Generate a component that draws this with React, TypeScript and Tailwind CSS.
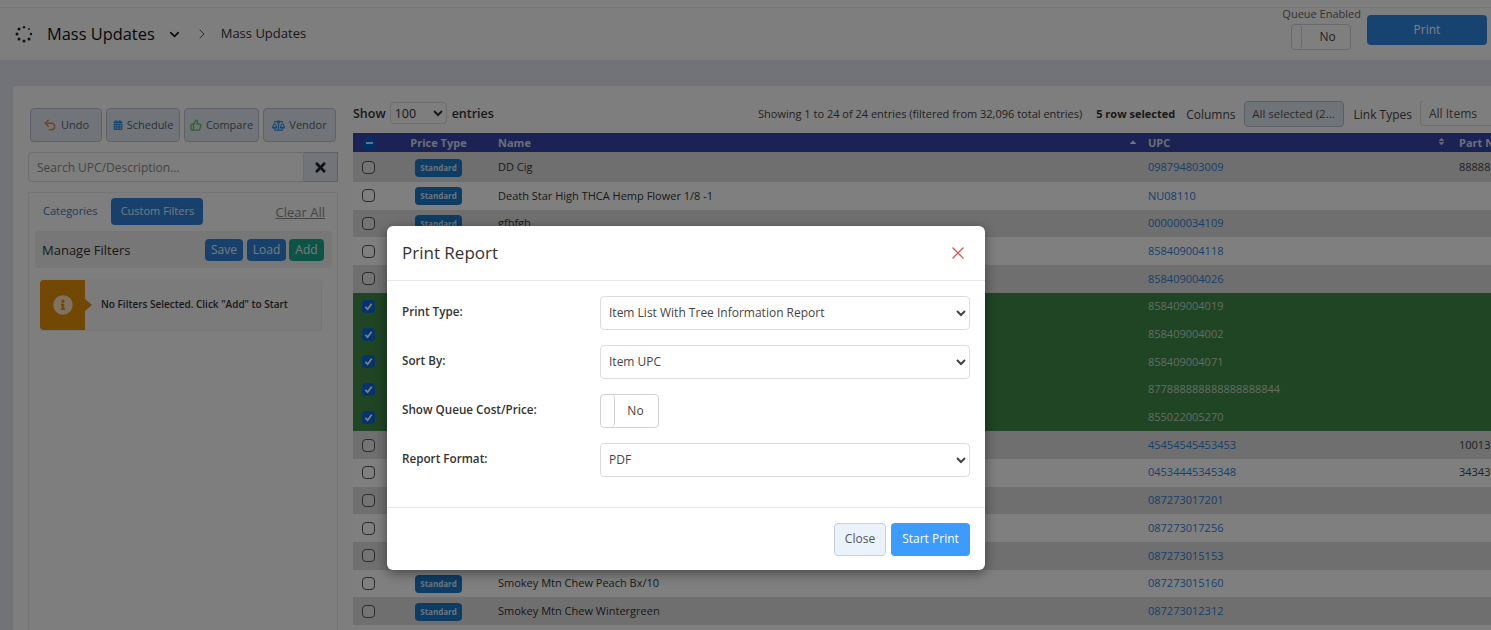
import React from 'react';
import { ChevronDown, ChevronRight, ThumbsUp, Undo2, X } from 'lucide-react';
import { FaBalanceScale, FaCalendarAlt, FaCaretUp, FaInfoCircle, FaSort, FaTimes } from 'react-icons/fa';

type Row = { upc: string; name?: string; part?: string; selected?: boolean; hideBadge?: boolean };

// rows 4-15 sit behind the dialog, so their price badge never shows
const rows: Row[] = [
  { upc: '098794803009', name: 'DD Cig', part: '88888' },
  { upc: 'NU08110', name: 'Death Star High THCA Hemp Flower 1/8 -1' },
  { upc: '000000034109', name: 'gfbfgh' },
  { upc: '858409004118', hideBadge: true },
  { upc: '858409004026', hideBadge: true },
  { upc: '858409004019', selected: true, hideBadge: true },
  { upc: '858409004002', selected: true, hideBadge: true },
  { upc: '858409004071', selected: true, hideBadge: true },
  { upc: '877888888888888888844', selected: true, hideBadge: true },
  { upc: '855022005270', selected: true, hideBadge: true },
  { upc: '45454545453453', part: '10013', hideBadge: true },
  { upc: '04534445345348', part: '34343', hideBadge: true },
  { upc: '087273017201', hideBadge: true },
  { upc: '087273017256', hideBadge: true },
  { upc: '087273015153', hideBadge: true },
  { upc: '087273015160', name: 'Smokey Mtn Chew Peach Bx/10' },
  { upc: '087273012312', name: 'Smokey Mtn Chew Wintergreen' },
];

const ToolButton = ({ icon, label, width }: { icon: React.ReactNode; label: string; width: string }) => (
  <button className={`${width} h-[34px] flex items-center justify-center gap-1 rounded border border-[#bcc5d0] bg-[#e2eaf2] text-[11px] text-[#59616b]`}>
    {icon}
    {label}
  </button>
);

const Spinner = () => (
  <svg width="18" height="18" viewBox="0 0 18 18" fill="#222">
    <circle cx="9" cy="2.2" r="1.2" />
    <circle cx="4" cy="4" r="1.5" />
    <circle cx="2" cy="9" r="1.5" />
    <circle cx="4" cy="14" r="1.5" />
    <circle cx="9" cy="16" r="1.5" />
    <circle cx="14" cy="14" r="1.5" />
    <circle cx="16" cy="9" r="1.2" />
    <circle cx="14" cy="4" r="0.9" />
  </svg>
);

const Toggle = ({ outer, knob, text }: { outer: string; knob: string; text: string }) => (
  <div className={`${outer} flex rounded border border-[#cfd3d8] bg-white`}>
    <div className={`${knob} rounded border-r border-[#cfd3d8]`} />
    <div className={`flex-1 flex items-center justify-center ${text}`}>No</div>
  </div>
);

const ModalSelect = ({ value }: { value: string }) => (
  <select
    defaultValue={value}
    className="w-[370px] h-[34px] rounded border border-[#d9dde2] bg-white px-[4px] pb-[2px] text-[12px] text-[#444]"
  >
    <option>{value}</option>
  </select>
);

const Label = ({ children }: { children: React.ReactNode }) => (
  <span className="w-[198px] -mt-[2px] text-[11.7px] font-semibold text-[#333]">{children}</span>
);

const App: React.FC = () => {
  return (
    <div className="relative w-[1491px] h-[630px] overflow-hidden bg-[#e4e7f2] font-['Open_Sans',sans-serif] text-[#333]">
      {/* Page header */}
      <div className="h-[60px] bg-[#fcfcfc]">
        <div className="h-[8px] border-b border-[#ececec]" />
        <div className="h-[52px] flex items-center pl-[15px] pr-[4px]">
          <Spinner />
          <span className="ml-[14px] text-[16.4px] text-[#111]">Mass Updates</span>
          <ChevronDown className="ml-[12px] text-[#111]" size={15} strokeWidth={2.5} />
          <ChevronRight className="ml-[12px] text-[#555]" size={16} strokeWidth={1.5} />
          <span className="ml-[11px] text-[13px] text-[#333]">Mass Updates</span>
          <div className="ml-auto flex items-start">
            <div className="flex flex-col items-center -mt-[13px]">
              <span className="ml-[2px] text-[11px] leading-[18px] text-[#666]">Queue Enabled</span>
              <Toggle outer="w-[60px] h-[26px] mt-[1px]" knob="w-[10px]" text="text-[12px] text-[#444] pl-1" />
            </div>
            <button className="ml-[6px] w-[120px] h-[30px] -mt-[3px] rounded bg-[#2e86e2] text-[12px] text-white">Print</button>
          </div>
        </div>
      </div>

      {/* Main card */}
      <div className="h-[570px] pt-[26px] pl-[13px]">
        <div className="h-full flex gap-[15px] rounded-tl bg-[#fcfcfc] pl-[15px] pt-[15px]">
          {/* Left column */}
          <div className="w-[310px] shrink-0 pt-[7px]">
            <div className="flex gap-[4px] pl-[2px]">
              <ToolButton width="w-[72px]" label="Undo" icon={<Undo2 size={14} strokeWidth={2.5} className="text-[#e88a3a]" />} />
              <ToolButton width="w-[74px]" label="Schedule" icon={<FaCalendarAlt size={10} className="text-[#2f8fe8]" />} />
              <ToolButton width="w-[75px]" label="Compare" icon={<ThumbsUp size={12} strokeWidth={2.5} className="text-[#55c455]" />} />
              <ToolButton width="w-[73px]" label="Vendor" icon={<FaBalanceScale size={13} className="text-[#2f8fe8]" />} />
            </div>

            <div className="mt-[10px] flex h-[30px]">
              <div className="flex-1 flex items-center rounded-l border border-[#d9dde2] px-[8px] pt-[2px] text-[12px] text-[#8a8a8a]">Search UPC/Description...</div>
              <div className="w-[34px] flex items-center justify-center border border-l-0 border-[#bcc5d0] bg-[#e2eaf2]">
                <FaTimes size={15} className="text-[#222]" />
              </div>
            </div>

            <div className="mt-[10px] h-[440px] border border-[#eaeaea] pl-[6px] pr-[5px] pt-[5px]">
              <div className="flex items-center h-[27px]">
                <span className="ml-[8px] text-[11px] text-[#3c78b4]">Categories</span>
                <button className="ml-[14px] w-[92px] h-[27px] rounded bg-[#2f82d8] text-[11px] text-[#e8f2fc]">Custom Filters</button>
                <span className="ml-auto mr-[7px] mt-[2px] text-[13px] text-[#8a8a8a] underline">Clear All</span>
              </div>
              <div className="mt-[6px] h-[37px] flex items-center gap-[4px] rounded bg-[#efefef] pl-[7px] pr-[8px]">
                <span className="mr-auto pt-[3px] text-[13px] text-[#333]">Manage Filters</span>
                <button className="w-[38px] h-[22px] rounded bg-[#2f82d8] text-[12px] text-[#e8f2fc]">Save</button>
                <button className="w-[39px] h-[22px] rounded bg-[#2f82d8] text-[12px] text-[#e8f2fc]">Load</button>
                <button className="w-[35px] h-[22px] -ml-[1px] rounded bg-[#1aa88e] text-[12px] text-[#e8f2fc]">Add</button>
              </div>
              <div className="mt-[11px] ml-[5px] w-[282px] h-[52px] flex items-center rounded-r border-b border-r border-[#ececec] bg-[#f6f6f6]">
                <div className="relative w-[45px] h-[50px] flex items-center justify-center rounded-l-sm bg-[#e68e08]">
                  <FaInfoCircle size={20} className="text-[#fbe6c0]" />
                  <div className="absolute -right-[7px] top-[19px] w-0 h-0 border-y-[6px] border-l-[7px] border-y-transparent border-l-[#e68e08]" />
                </div>
                <span className="ml-[16px] text-[10px] font-semibold text-[#333]">No Filters Selected. Click "Add" to Start</span>
              </div>
            </div>
          </div>

          {/* Table column */}
          <div className="flex-1 min-w-0 overflow-hidden">
            <div className="h-[32px] flex items-start whitespace-nowrap">
              <span className="mt-[4px] text-[12.5px] font-semibold text-[#333]">Show</span>
              <select defaultValue="100" className="ml-[4px] mt-[1px] w-[57px] h-[22px] rounded border border-[#dcdcdc] text-[12.5px] text-[#333]">
                <option>100</option>
              </select>
              <span className="ml-[5px] mt-[4px] text-[12.5px] font-semibold text-[#333]">entries</span>
              <span className="ml-auto mt-[5px] text-[11px] text-[#444]">Showing 1 to 24 of 24 entries (filtered from 32,096 total entries)</span>
              <span className="ml-[14px] mt-[5px] text-[11px] font-bold text-[#333]">5 row selected</span>
              <span className="ml-[11px] mt-[5px] text-[12px] text-[#444]">Columns</span>
              <div className="ml-[8px] w-[100px] h-[26px] flex items-center justify-center rounded border border-[#b4bfca] bg-[#dfe8f2] text-[11.5px] text-[#555]">All selected (2...</div>
              <span className="ml-[10px] mt-[5px] text-[12px] text-[#444]">Link Types</span>
              <div className="ml-[8px] w-[71px] h-[26px] -mt-[1px] pl-[8px] pt-[1px] flex items-center rounded-l border border-r-0 border-[#dcdcdc] text-[12px] text-[#555]">All Items</div>
            </div>

            <div className="h-[19px] pt-[1px] grid grid-cols-[32px_107px_650px_310px_60px] items-center whitespace-nowrap bg-[#3647a8] text-[11px] font-bold text-[#d8dcf0]">
              <div className="pl-[10px]">
                <div className="w-[13px] h-[13px] flex items-center justify-center rounded-sm bg-[#0a5cc8]">
                  <div className="w-[7px] h-[2px] bg-[#d8e4f8]" />
                </div>
              </div>
              <div className="text-center">Price Type</div>
              <div className="relative pl-[6px]">
                Name
                <FaCaretUp size={10} className="absolute right-[4px] top-[2px] text-[#e8eaf8]" />
              </div>
              <div className="relative pl-[6px]">
                UPC
                <FaSort size={9} className="absolute right-[6px] top-[2px] text-[#c8cce8]" />
              </div>
              <div className="pl-[7px]">Part No</div>
            </div>

            {rows.map((row, i) => (
              <div
                key={row.upc}
                className={`${i === 0 ? 'h-[30px] pt-[1px]' : 'h-[27.7px]'} grid grid-cols-[32px_107px_650px_310px_60px] items-center text-[11px] ${
                  row.selected ? 'bg-[#3f8a48]' : i % 2 === 0 ? 'bg-[#dedede]' : 'bg-white'
                }`}
              >
                <div className="pl-[9px]">
                  {row.selected ? (
                    <div className="w-[13px] h-[13px] flex items-center justify-center rounded-sm bg-[#0a66dc]">
                      <svg width="9" height="9" viewBox="0 0 10 10" fill="none" stroke="#fff" strokeWidth="2">
                        <path d="M1.5 5.5 4 8l4.5-6" />
                      </svg>
                    </div>
                  ) : (
                    <div className="w-[13px] h-[13px] rounded-sm border border-[#555] bg-white/30" />
                  )}
                </div>
                <div className="flex justify-center pt-[1px]">
                  {!row.hideBadge && (
                    <span className="w-[47px] h-[18px] flex items-center justify-center rounded-sm bg-[#1a78c8] text-[8px] font-bold text-[#d8e8f4]">Standard</span>
                  )}
                </div>
                <div className="pl-[6px] text-[#333]">{row.name}</div>
                <div className={`pl-[6px] ${row.selected ? 'text-[#c8d8c8]' : 'text-[#2f7fd8]'}`}>{row.upc}</div>
                <div className="pl-[7px] text-[#444]">{row.part}</div>
              </div>
            ))}
          </div>
        </div>
      </div>

      {/* Print dialog */}
      <div className="absolute inset-0 bg-black/50 pt-[226px] pl-[387px]">
        <div className="w-[598px] h-[344px] rounded-md bg-white shadow-[0_3px_12px_rgba(0,0,0,0.45)]">
          <div className="h-[55px] flex items-center justify-between border-b border-[#e6e6e6] pl-[15px] pr-[17px]">
            <span className="text-[17px] text-[#333]">Print Report</span>
            <X size={20} strokeWidth={1.6} className="text-[#e2535c]" />
          </div>
          <div className="h-[227px] flex flex-col gap-[15px] pl-[15px] pt-[15px] border-b border-[#e6e6e6]">
            <div className="flex items-center">
              <Label>Print Type:</Label>
              <ModalSelect value="Item List With Tree Information Report" />
            </div>
            <div className="flex items-center">
              <Label>Sort By:</Label>
              <ModalSelect value="Item UPC" />
            </div>
            <div className="flex items-center">
              <Label>Show Queue Cost/Price:</Label>
              <Toggle outer="w-[59px] h-[34px]" knob="w-[14px]" text="text-[12px] text-[#444] pr-[2px]" />
            </div>
            <div className="flex items-center">
              <Label>Report Format:</Label>
              <ModalSelect value="PDF" />
            </div>
          </div>
          <div className="flex justify-end gap-[5px] pt-[15px] pr-[15px]">
            <button className="w-[52px] h-[33px] pb-[2px] rounded border border-[#c8d0d8] bg-[#eaf2fa] text-[12px] text-[#555]">Close</button>
            <button className="w-[79px] h-[33px] pb-[2px] rounded bg-[#3b9bff] text-[12px] font-medium text-white">Start Print</button>
          </div>
        </div>
      </div>
    </div>
  );
};

export default App;
